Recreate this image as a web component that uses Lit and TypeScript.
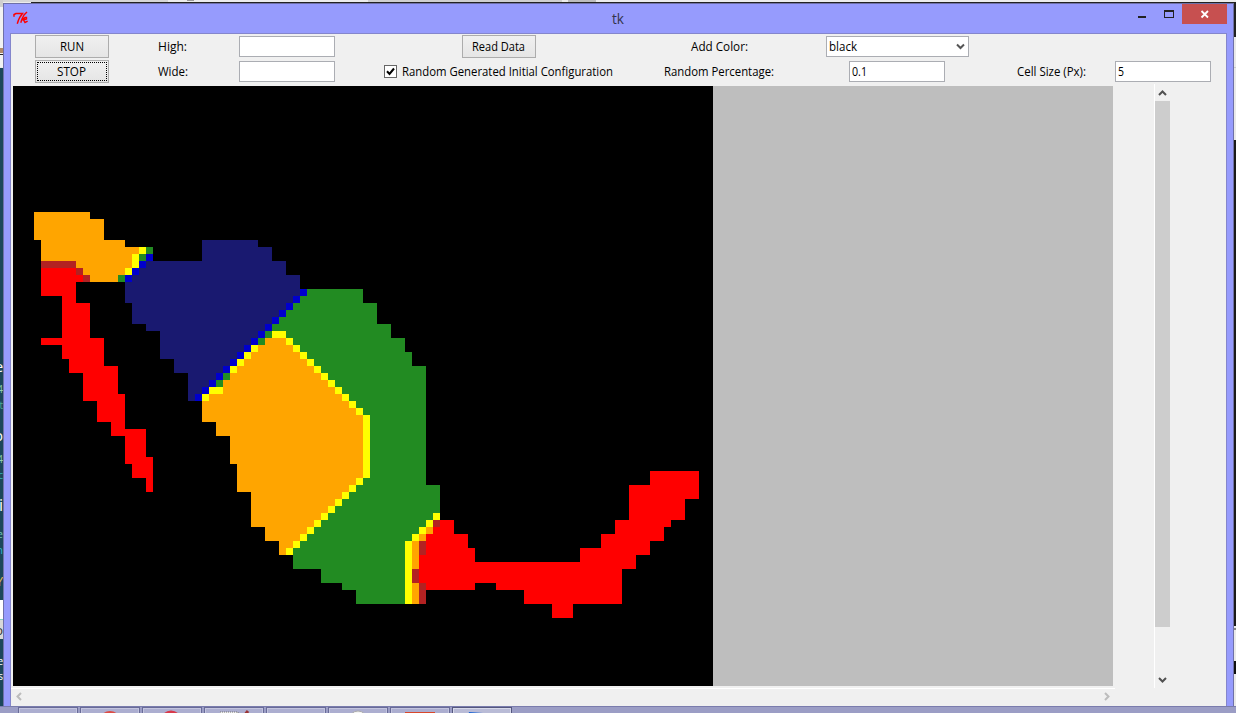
import { LitElement, html, svg, css } from "lit";
import { customElement, property } from "lit/decorators.js";

const COLORS: Record<string, string> = {
  o: "#ffa500",
  y: "#ffff00",
  g: "#228b22",
  b: "#0000cd",
  n: "#191970",
  w: "#b22222",
  r: "#ff0000",
};

// Each entry: first row, last row, then runs "<colour><first column>-<end column>".
const RUNS: [number, number, string][] = [
  [18, 18, "o3-11"],
  [19, 21, "o3-13"],
  [22, 22, "o4-16 n27-35"],
  [23, 23, "o4-18 y18-19 g19-20 n27-37"],
  [24, 24, "o4-17 y17-18 g18-19 b19-20 n27-37"],
  [25, 25, "w4-9 o9-17 y17-18 b18-19 n19-39"],
  [26, 26, "r4-9 w9-10 o10-16 y16-17 b17-18 n18-39"],
  [27, 27, "r4-10 w10-11 o11-15 g15-16 b16-17 n17-41"],
  [28, 28, "r4-9 n16-41"],
  [29, 29, "r4-9 n16-41 b41-42 g42-50"],
  [30, 30, "r7-9 n16-40 b40-41 g41-50"],
  [31, 31, "r7-11 n17-39 b39-40 g40-52"],
  [32, 32, "r7-11 n17-38 b38-39 g39-52"],
  [33, 33, "r7-11 n17-37 b37-38 g38-52"],
  [34, 34, "r7-11 n19-36 b36-37 g37-54"],
  [35, 35, "r7-11 n21-35 b35-36 g36-37 y37-39 g39-54"],
  [36, 36, "r4-13 n21-34 b34-35 g35-36 o36-39 y39-40 g40-56"],
  [37, 37, "r7-13 n21-33 b33-34 y34-35 o35-40 y40-41 g41-56"],
  [38, 38, "r7-13 n21-32 b32-33 y33-34 o34-41 y41-42 g42-57"],
  [39, 39, "r8-13 n23-31 b31-32 y32-33 o33-42 y42-43 g43-57"],
  [40, 40, "r8-15 n23-30 b30-31 y31-32 o32-43 y43-44 g44-59"],
  [41, 41, "r10-15 n25-29 b29-30 g30-31 o31-44 y44-45 g45-59"],
  [42, 42, "r10-15 n25-28 b28-29 g29-30 o30-45 y45-46 g46-59"],
  [43, 43, "r10-15 n25-27 b27-28 y28-30 o30-46 y46-47 g47-59"],
  [44, 44, "r10-16 n25-26 b26-27 y27-28 o28-47 y47-48 g48-59"],
  [45, 45, "r12-16 o27-48 y48-49 g49-59"],
  [46, 46, "r12-16 o27-49 y49-50 g50-59"],
  [47, 47, "r12-16 o27-50 y50-51 g51-59"],
  [48, 48, "r14-16 o29-50 y50-51 g51-59"],
  [49, 49, "r14-19 o29-50 y50-51 g51-59"],
  [50, 52, "r16-19 o31-50 y50-51 g51-59"],
  [53, 53, "r16-20 o31-50 y50-51 g51-59"],
  [54, 54, "r17-20 o32-50 y50-51 g51-59"],
  [55, 55, "r17-20 o32-50 y50-51 g51-59 r91-98"],
  [56, 56, "r19-20 o32-49 y49-50 g50-59 r91-98"],
  [57, 57, "r19-20 o32-48 y48-49 g49-61 r88-98"],
  [58, 58, "o34-47 y47-48 g48-61 r88-98"],
  [59, 59, "o34-46 y46-47 g47-61 r88-96"],
  [60, 60, "o34-45 y45-46 g46-61 r88-96"],
  [61, 61, "o34-44 y44-45 g45-60 y60-61 r88-96"],
  [62, 62, "o34-43 y43-44 g44-59 y59-60 w60-61 r61-63 r86-94"],
  [63, 63, "o36-42 y42-43 g43-58 y58-59 o59-60 r60-63 r86-93"],
  [64, 64, "o36-41 y41-42 g42-57 y57-58 o58-59 r59-65 r84-93"],
  [65, 65, "o38-40 y40-41 g41-56 y56-57 o57-58 w58-59 r59-65 r84-91"],
  [66, 66, "o38-39 y39-40 g40-56 y56-57 o57-58 w58-59 r59-66 r81-91"],
  [67, 67, "g40-56 y56-57 o57-58 r58-66 r81-89"],
  [68, 68, "g40-56 y56-57 o57-58 r58-89"],
  [69, 70, "g44-56 y56-57 w57-58 r58-87"],
  [71, 71, "g47-56 y56-57 o57-58 w58-59 r59-66 r69-87"],
  [72, 73, "g49-56 y56-57 o57-58 w58-59 r73-87"],
  [74, 75, "r77-80"],
];

const CELL = 7;

@customElement("cell-map")
export class CellMap extends LitElement {
  static styles = css`
    :host { display: block; width: 700px; height: 600px; background: #000; }
    svg { display: block; }
  `;
  render() {
    return html`<svg width="700" height="600" shape-rendering="crispEdges">
      ${RUNS.map(([first, last, runs]) =>
        runs.split(" ").map((run) => {
          const [from, to] = run.slice(1).split("-").map(Number);
          return svg`<rect x=${from * CELL} y=${first * CELL} width=${(to - from) * CELL}
            height=${(last - first + 1) * CELL} fill=${COLORS[run[0]]}></rect>`;
        })
      )}
    </svg>`;
  }
}

// A line of interface text set to a given advance width.
@customElement("ui-text")
export class UiText extends LitElement {
  static styles = css`
    :host { display: block; }
    svg { display: block; overflow: visible; }
    text { font-family: "Open Sans", "Noto Sans", sans-serif; fill: var(--ink, #000); }
  `;
  @property() text = "";
  @property({ type: Number }) w = 20;
  @property({ type: Number }) size = 12;
  render() {
    return html`<svg width=${this.w} height="17">
      <text x="0" y="13" font-size=${this.size} textLength=${this.w} lengthAdjust="spacingAndGlyphs">${this.text}</text>
    </svg>`;
  }
}

const label = (text: string, w: number, size = 12) =>
  html`<ui-text .text=${text} .w=${w} .size=${size}></ui-text>`;

@customElement("app-root")
export class AppRoot extends LitElement {
  static styles = css`
    :host { display: block; width: 1236px; height: 713px; overflow: hidden; }
    * { box-sizing: border-box; }
    svg { display: block; }
    .desktop { position: relative; width: 1236px; height: 713px; overflow: hidden; background: #e9e9e9; }
    .backdrop { position: absolute; inset: 0; }
    .window {
      position: absolute; left: 3px; top: 3px; width: 1231px; height: 720px;
      border: 1px solid #6e70a8; background: #969bfd; padding: 0 6px;
      display: flex; flex-direction: column;
    }
    .title { height: 29px; display: grid; grid-template-columns: 1fr auto 1fr; }
    .logo { padding: 7px 0 0 3px; }
    .name { padding: 7px 1px 0 0; --ink: #33334a; }
    .buttons { display: flex; justify-content: flex-end; }
    .close { width: 45px; height: 20px; background: #c75050; }
    .client {
      flex: 1; background: #f0f0f0; border: 1px solid #8486cc;
      display: flex; flex-direction: column;
    }
    .controls {
      display: grid; height: 50px;
      grid-template-columns: 122px 79px 150px 274px 166px 191px 116px 108px;
      grid-template-rows: 25px 25px; place-items: center;
    }
    .btn {
      width: 74px; height: 23px; border: 1px solid #acacac;
      background: linear-gradient(#f0f0f0, #e5e5e5);
      display: flex; justify-content: center; padding-top: 2px;
    }
    .odd { padding-right: 1px; }
    .focus { padding: 1px; }
    .ring { flex: 1; border: 1px dotted #000; display: flex; justify-content: center; padding-right: 1px; }
    .entry { width: 96px; height: 21px; border: 1px solid #abadb3; background: #fff; padding: 1px 2px; }
    .shift { margin-right: 1px; }
    .combo { width: 143px; display: flex; justify-content: space-between; }
    .check { display: flex; align-items: center; gap: 5px; margin-right: 1px; }
    .check svg { flex: none; }
    .main { display: flex; height: 604px; }
    .canvas { width: 1102px; height: 602px; margin: 2px 41px 0 0; padding: 0 0 2px 2px; }
    .board { background: #bebebe; height: 600px; }
    .vbar {
      width: 17px; border-left: 1px solid #fff; display: flex;
      flex-direction: column; justify-content: space-between;
    }
    .thumb { width: 15px; height: 526px; margin-top: -2px; background: #cdcdcd; }
    .spacer { height: 39px; }
    .hbar {
      width: 1104px; border-top: 1px solid #fff; height: 18px;
      display: flex; justify-content: space-between; padding: 3px 5px 0 5px;
    }
    .taskbar {
      position: absolute; left: 0; right: 0; bottom: 0; height: 7px;
      border-top: 1px solid #7a7cad; background: #9b9dc5; display: flex; gap: 2px; padding-left: 18px;
    }
    .task { width: 60px; height: 8px; border: 1px solid #686b98; box-shadow: inset 0 0 0 1px #c3c4df; background: #acaed0; overflow: hidden; }
    .task.active { background: #b9bbd6; border-color: #54577e; box-shadow: inset 0 0 0 1px #d6d8ea; }
  `;

  private backdrop() {
    const bits: [number, string, string, number][] = [
      [372, "e", "#fff", 14], [393, "4", "#8fcfae", 10], [409, "t", "#4fae95", 10],
      [441, "o", "#fff", 14], [463, "4", "#8fcfae", 10], [479, "c", "#35b0b8", 10],
      [511, "i", "#fff", 16], [538, "e", "#6fc3b4", 11], [554, "n", "#2fb3c9", 11],
      [586, "Y", "#e8be5a", 13], [635, "o", "#333", 13], [665, "e", "#fff", 10], [680, "s", "#fff", 10],
    ];
    return html`<svg class="backdrop" width="1236" height="713" shape-rendering="crispEdges">
      <rect width="1236" height="3" fill="#ececec"></rect>
      <rect width="168" height="2" fill="#d6d6d6"></rect>
      <rect x="368" width="194" height="2" fill="#cfcfcf"></rect>
      <rect x="187" width="7" height="1" fill="#999"></rect>
      <rect x="568" width="28" height="2" fill="#bdbdbd"></rect>
      <rect x="31" y="2" width="1205" height="1" fill="#222"></rect>
      <rect width="3" height="7" fill="#cfcfcf"></rect>
      <rect y="7" width="3" height="60" fill="#f2f2f2"></rect>
      <rect y="48" width="3" height="5" fill="#b08968"></rect>
      <rect y="54" width="3" height="1" fill="#222"></rect>
      <rect y="68" width="3" height="640" fill="#1c475b"></rect>
      <rect y="600" width="3" height="19" fill="#fff"></rect>
      <rect y="619" width="3" height="1" fill="#7fd0c0"></rect>
      <rect y="620" width="3" height="19" fill="#d8d8d8"></rect>
      ${bits.map(([y, t, c, s]) => svg`<text x="3" y=${y} text-anchor="end" font-size=${s}
        font-family="Open Sans, sans-serif" fill=${c}>${t}</text>`)}
      <rect x="1234" y="2" width="2" height="35" fill="#222"></rect>
      <rect x="1234" y="67" width="2" height="1" fill="#ccc"></rect>
      <rect x="1234" y="140" width="2" height="486" fill="#1b1b1b"></rect>
      <rect x="1234" y="628" width="2" height="2" fill="#888"></rect>
      <rect x="1234" y="661" width="2" height="13" fill="#111"></rect>
    </svg>`;
  }

  render() {
    return html`<div class="desktop">
      ${this.backdrop()}
      <div class="window">
        <div class="title">
          <div class="logo">
            <svg width="16" height="16" viewBox="0 0 16 16" fill="none" stroke="#f00" stroke-linecap="square">
              <path d="M1 5V3.5L3 2.5H9.5L7 6L5.5 9L4.5 12" stroke-width="1.5"></path>
              <path d="M13.5 1.5L11 4L9 8L8 11M9 9L12 6.5H13.5V8L10.5 9L12 11.5L14 10.5" stroke-width="1.4"></path>
            </svg>
          </div>
          <div class="name">${label("tk", 12, 15)}</div>
          <div class="buttons">
            <svg width="44" height="20" shape-rendering="crispEdges">
              <rect x="0" y="12" width="8" height="2" fill="#222"></rect>
              <path d="M26 6H36V14H26ZM27 8V13H35V8Z" fill="#222" fill-rule="evenodd"></path>
            </svg>
            <div class="close">
              <svg width="45" height="20"><path d="M19.5 7L26 13.5M26 7L19.5 13.5" stroke="#fff" stroke-width="1.8"></path></svg>
            </div>
          </div>
        </div>
        <div class="client">
          <div class="controls">
            <div class="btn">${label("RUN", 24)}</div>
            ${label("High:", 29)}
            <div class="entry"></div>
            <div class="btn odd">${label("Read Data", 53)}</div>
            ${label("Add Color:", 57)}
            <div class="entry combo">
              ${label("black", 28)}
              <svg width="10" height="17"><path d="M1 6.5L4.5 10L8 6.5" fill="none" stroke="#555" stroke-width="2"></path></svg>
            </div>
            <span></span><span></span>
            <div class="btn focus"><div class="ring">${label("STOP", 29)}</div></div>
            ${label("Wide:", 30)}
            <div class="entry"></div>
            <div class="check">
              <svg width="13" height="13">
                <rect x=".5" y=".5" width="12" height="12" fill="#fff" stroke="#666"></rect>
                <path d="M3 6.3L5.5 9L10 3.5" fill="none" stroke="#000" stroke-width="2"></path>
              </svg>
              ${label("Random Generated Initial Configuration", 211)}
            </div>
            ${label("Random Percentage:", 110)}
            <div class="entry shift">${label("0.1", 15)}</div>
            ${label("Cell Size (Px):", 69)}
            <div class="entry">${label("5", 6)}</div>
          </div>
          <div class="main">
            <div class="canvas"><div class="board"><cell-map></cell-map></div></div>
            <div class="vbar">
              <svg width="15" height="17"><path d="M4 11L7.5 7.5L11 11" fill="none" stroke="#505050" stroke-width="2"></path></svg>
              <div class="thumb"></div>
              <div class="spacer"></div>
              <svg width="15" height="17"><path d="M4 7L7.5 10.5L11 7" fill="none" stroke="#505050" stroke-width="2"></path></svg>
            </div>
          </div>
          <div class="hbar">
            <svg width="7" height="9"><path d="M5 1L1.5 4.5L5 8" fill="none" stroke="#bcbcbc" stroke-width="2"></path></svg>
            <svg width="7" height="9"><path d="M2 1L5.5 4.5L2 8" fill="none" stroke="#bcbcbc" stroke-width="2"></path></svg>
          </div>
        </div>
      </div>
      <div class="taskbar">
        <div class="task"></div>
        <div class="task"><svg width="58" height="6"><circle cx="29" cy="14" r="11" fill="#dc4b45"></circle></svg></div>
        <div class="task"><svg width="58" height="6"><circle cx="28" cy="13" r="9" fill="#eee" stroke="#d8394a" stroke-width="3"></circle></svg></div>
        <div class="task"><svg width="58" height="6"><rect x="15" y="4" width="18" height="4" fill="#eee" stroke="#777" stroke-dasharray="1 1"></rect><path d="M43 3L39 8" stroke="#9a3434" stroke-width="3"></path></svg></div>
        <div class="task"></div>
        <div class="task"><svg width="58" height="6"><circle cx="29" cy="12" r="9" fill="#f4f4f4" stroke="#aaa"></circle></svg></div>
        <div class="task"><svg width="58" height="6"><rect x="14" y="4" width="30" height="5" fill="#d9472b"></rect></svg></div>
        <div class="task active"><svg width="58" height="6"><path d="M16 4L30 5L36 8H15Z" fill="#1763d6"></path></svg></div>
      </div>
    </div>`;
  }
}
